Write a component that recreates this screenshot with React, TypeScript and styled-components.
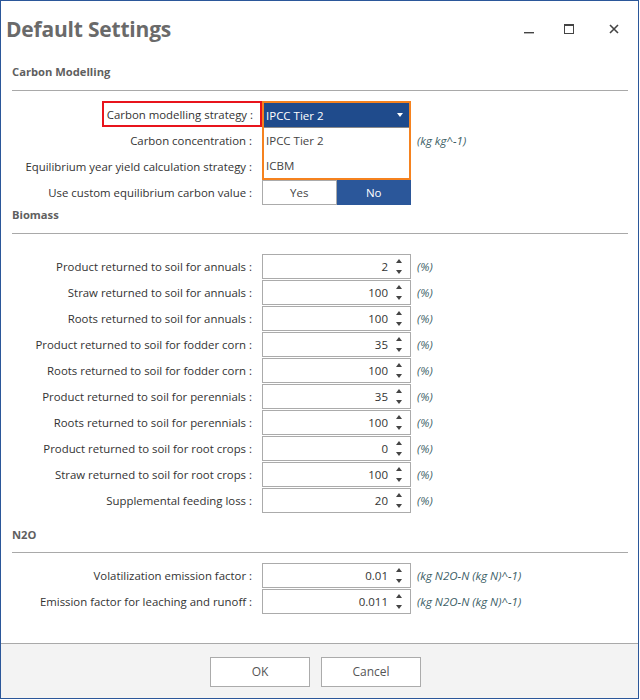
import React from 'react';
import styled, { createGlobalStyle } from 'styled-components';

const GlobalStyle = createGlobalStyle`
  html, body {
    margin: 0;
    padding: 0;
    background: #ffffff;
  }
  body {
    font-family: 'Open Sans', 'Noto Sans', sans-serif;
    color: #333;
  }
`;

const BLUE = '#2b579a';

interface Field {
  label: string;
  value: string;
  unit: string;
}

const biomass: Field[] = [
  { label: 'Product returned to soil for annuals :', value: '2', unit: '(%)' },
  { label: 'Straw returned to soil for annuals :', value: '100', unit: '(%)' },
  { label: 'Roots returned to soil for annuals :', value: '100', unit: '(%)' },
  { label: 'Product returned to soil for fodder corn :', value: '35', unit: '(%)' },
  { label: 'Roots returned to soil for fodder corn :', value: '100', unit: '(%)' },
  { label: 'Product returned to soil for perennials :', value: '35', unit: '(%)' },
  { label: 'Roots returned to soil for perennials :', value: '100', unit: '(%)' },
  { label: 'Product returned to soil for root crops :', value: '0', unit: '(%)' },
  { label: 'Straw returned to soil for root crops :', value: '100', unit: '(%)' },
  { label: 'Supplemental feeding loss :', value: '20', unit: '(%)' },
];

const n2o: Field[] = [
  { label: 'Volatilization emission factor :', value: '0.01', unit: '(kg N2O-N (kg N)^-1)' },
  { label: 'Emission factor for leaching and runoff :', value: '0.011', unit: '(kg N2O-N (kg N)^-1)' },
];

const Window = styled.div`
  width: 639px;
  height: 699px;
  box-sizing: border-box;
  border: 1px solid ${BLUE};
  background: #fff;
  display: flex;
  flex-direction: column;
`;

const TitleBar = styled.div`
  height: 55px;
  display: flex;
  align-items: center;
  padding-left: 5px;
`;

const Title = styled.h1`
  margin: 0;
  flex: 1;
  font-size: 21px;
  font-weight: 700;
  color: #6a6a6a;
  letter-spacing: -0.2px;
`;

const Controls = styled.div`
  display: flex;
  align-items: center;
`;

const ControlButton = styled.div<{ $wide?: boolean }>`
  width: ${(p) => (p.$wide ? 49 : 40)}px;
  height: 30px;
  display: flex;
  align-items: center;
  justify-content: center;
  color: #444;
`;

const Content = styled.div`
  flex: 1;
  padding: 0 10px 0 10px;
`;

const SectionTitle = styled.div<{ $top: number }>`
  margin-top: ${(p) => p.$top}px;
  font-size: 11.2px;
  font-weight: 700;
  line-height: 18px;
  color: #5f5f5f;
  padding-left: 1px;
`;

const Separator = styled.div<{ $top: number; $bottom: number }>`
  height: 1px;
  background: #a9a9a9;
  margin: ${(p) => p.$top}px 0 ${(p) => p.$bottom}px 1px;
`;

const Form = styled.div`
  display: grid;
  grid-template-columns: 241px 149px auto;
  grid-auto-rows: 26px;
  column-gap: 10px;
  align-items: start;
`;

const Label = styled.div`
  height: 25px;
  display: flex;
  align-items: center;
  justify-content: flex-end;
  font-size: 11.4px;
  color: #333;
  white-space: nowrap;
`;

const Highlight = styled.span`
  border: 2px solid #e8141c;
  padding: 4px 7px 3px 3px;
  margin-right: -10px;
  margin-top: -1px;
`;

const NumberBox = styled.div`
  height: 25px;
  box-sizing: border-box;
  border: 1px solid #ababab;
  display: flex;
  align-items: center;
  justify-content: flex-end;
  font-size: 11.5px;
  color: #333;
  background: #fff;
`;

const Spinner = styled.div`
  width: 22px;
  display: flex;
  flex-direction: column;
  align-items: center;
  gap: 7px;
`;

const Unit = styled.div`
  height: 25px;
  display: flex;
  align-items: center;
  font-size: 11.5px;
  font-style: italic;
  color: #3c5e66;
  margin-left: -4px;
  white-space: nowrap;
`;

const SelectCell = styled.div`
  position: relative;
  height: 25px;
`;

const Popup = styled.div`
  position: absolute;
  top: -1px;
  left: 0;
  width: 149px;
  box-sizing: border-box;
  border: 2px solid #f5821f;
  background: #fff;
  z-index: 2;
`;

const SelectHead = styled.div`
  height: 24px;
  background: #1f4b8c;
  color: #fff;
  display: flex;
  align-items: center;
  justify-content: space-between;
  padding: 0 6px 0 2px;
  font-size: 11.5px;
  border-bottom: 1px solid #8a8a8a;
`;

const Option = styled.div`
  height: 25px;
  display: flex;
  align-items: center;
  padding-left: 2px;
  font-size: 11.5px;
  color: #444;
`;

const Toggle = styled.div`
  height: 25px;
  display: flex;
  box-sizing: border-box;
`;

const ToggleOption = styled.div<{ $active?: boolean }>`
  flex: 1;
  display: flex;
  align-items: center;
  justify-content: center;
  font-size: 11.5px;
  box-sizing: border-box;
  border: 1px solid ${(p) => (p.$active ? BLUE : '#ababab')};
  background: ${(p) => (p.$active ? BLUE : '#fff')};
  color: ${(p) => (p.$active ? '#fff' : '#444')};
`;

const Footer = styled.div`
  height: 54px;
  border-top: 1px solid #a9a9a9;
  background: #f3f3f3;
  display: flex;
  align-items: center;
  justify-content: center;
  gap: 11px;
  padding-right: 8px;
`;

const FooterButton = styled.button`
  width: 100px;
  height: 30px;
  border: 1px solid #ababab;
  background: #fff;
  font-family: inherit;
  font-size: 12px;
  color: #555;
  margin-top: 1px;
`;

const Arrow = ({ down, color = '#444' }: { down?: boolean; color?: string }) => (
  <svg width="6" height="4" viewBox="0 0 6 4">
    <path d={down ? 'M0 0 L6 0 L3 4 Z' : 'M0 4 L6 4 L3 0 Z'} fill={color} />
  </svg>
);

function NumberInput({ value }: { value: string }) {
  return (
    <NumberBox>
      <span>{value}</span>
      <Spinner>
        <Arrow />
        <Arrow down />
      </Spinner>
    </NumberBox>
  );
}

function FieldRows({ fields }: { fields: Field[] }) {
  return (
    <Form>
      {fields.map((f) => (
        <React.Fragment key={f.label}>
          <Label>{f.label}</Label>
          <NumberInput value={f.value} />
          <Unit>{f.unit}</Unit>
        </React.Fragment>
      ))}
    </Form>
  );
}

export default function App() {
  return (
    <>
      <GlobalStyle />
      <Window>
        <TitleBar>
          <Title>Default Settings</Title>
          <Controls>
            <ControlButton>
              <svg width="10" height="10" viewBox="0 0 10 10">
                <rect x="0" y="8" width="10" height="1.4" fill="#444" />
              </svg>
            </ControlButton>
            <ControlButton>
              <svg width="10" height="10" viewBox="0 0 10 10">
                <rect x="0.5" y="0.5" width="9" height="9" fill="none" stroke="#444" />
                <rect x="0" y="0" width="10" height="2" fill="#444" />
              </svg>
            </ControlButton>
            <ControlButton $wide>
              <svg width="10" height="10" viewBox="0 0 10 10">
                <path d="M1 1 L9 9 M9 1 L1 9" stroke="#444" strokeWidth="1.6" />
              </svg>
            </ControlButton>
          </Controls>
        </TitleBar>

        <Content>
          <SectionTitle $top={7}>Carbon Modelling</SectionTitle>
          <Separator $top={9} $bottom={11} />
          <Form>
            <Label>
              <Highlight>Carbon modelling strategy :</Highlight>
            </Label>
            <SelectCell>
              <Popup>
                <SelectHead>
                  <span>IPCC Tier 2</span>
                  <Arrow down color="#fff" />
                </SelectHead>
                <Option>IPCC Tier 2</Option>
                <Option>ICBM</Option>
              </Popup>
            </SelectCell>
            <span />

            <Label>Carbon concentration :</Label>
            <NumberInput value="0" />
            <Unit>(kg kg^-1)</Unit>

            <Label>Equilibrium year yield calculation strategy :</Label>
            <NumberInput value="" />
            <span />

            <Label>Use custom equilibrium carbon value :</Label>
            <Toggle>
              <ToggleOption>Yes</ToggleOption>
              <ToggleOption $active>No</ToggleOption>
            </Toggle>
            <span />
          </Form>

          <SectionTitle $top={0}>Biomass</SectionTitle>
          <Separator $top={9} $bottom={20} />
          <FieldRows fields={biomass} />

          <SectionTitle $top={12}>N2O</SectionTitle>
          <Separator $top={8} $bottom={10} />
          <FieldRows fields={n2o} />
        </Content>

        <Footer>
          <FooterButton>OK</FooterButton>
          <FooterButton>Cancel</FooterButton>
        </Footer>
      </Window>
    </>
  );
}
